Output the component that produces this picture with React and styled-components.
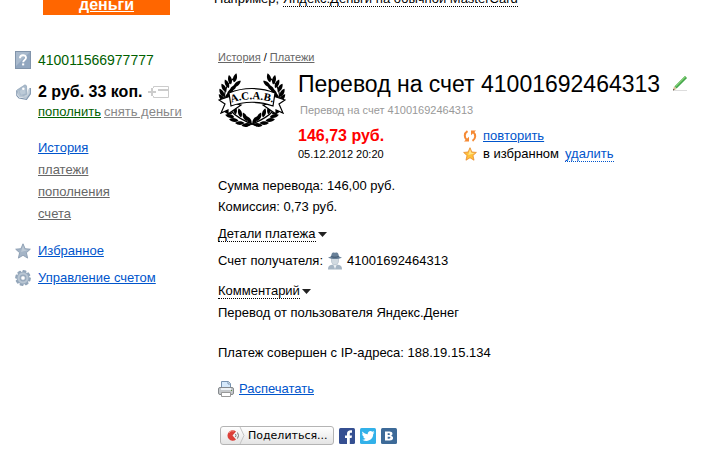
import React from "react";
import styled, { createGlobalStyle } from "styled-components";

const GlobalStyle = createGlobalStyle`
    body {
        margin: 0;
        background: #fff;
        color: #000;
        font-family: Arial, "Liberation Sans", sans-serif;
        font-size: 13px;
        line-height: 20px;
    }
    svg {
        display: block;
        flex: none;
    }
`

const Header = styled.header`
    display: flex;
    align-items: flex-end;
    height: 15px;
    overflow: hidden;
`
const LogoCell = styled.div`
    flex: none;
    box-sizing: border-box;
    width: 214px;
    padding-left: 43px;
`
const Logo = styled.a`
    display: block;
    width: 127px;
    background: #f60;
    color: #fff;
    font-size: 16px;
    font-weight: bold;
    line-height: 20px;
    text-align: center;
`
const Hint = styled.div`
    padding-bottom: 8px;
    line-height: 15px;
    white-space: nowrap;
`
const DottedButton = styled.button`
    padding: 0;
    border: 0;
    border-bottom: 1px dotted ${props => props.$color || "#000"};
    background: none;
    color: ${props => props.$color || "#000"};
    font: inherit;
    line-height: 15px;
    cursor: pointer;
`

const Page = styled.div`
    display: flex;
    align-items: flex-start;
`
const Sidebar = styled.aside`
    flex: none;
    box-sizing: border-box;
    width: 218px;
    padding: 35px 0 0 15px;
`
const SideRow = styled.div`
    display: grid;
    grid-template-columns: 16px 1fr;
    column-gap: 7px;
    align-items: center;
    margin-top: ${props => props.$gap || 0}px;
`
const Account = styled.div`
    color: #006000;
    font-size: 14px;
`
const Balance = styled.div`
    display: flex;
    align-items: center;
    gap: 5px;
    font-size: 16px;
    font-weight: bold;
`
const Link = styled.a`
    color: ${props => props.$color || "#05c"};
    text-decoration: underline;
`
const Actions = styled.div`
    display: flex;
    gap: 3px;
    padding-left: 23px;
`
const NavList = styled.ul`
    margin: 15px 0 0;
    padding: 0 0 0 23px;
    list-style: none;
    line-height: 22px;
`

const Main = styled.main`
    flex: 1;
    min-width: 0;
    padding: 34px 8px 24px 0;
`
const Crumbs = styled.nav`
    font-size: 11px;
    line-height: 16px;
`
const Payment = styled.section`
    display: grid;
    grid-template-columns: 68px 1fr;
    column-gap: 12px;
    padding-top: 4px;
`
const Title = styled.h1`
    display: flex;
    align-items: center;
    gap: 12px;
    margin: 0;
    font-size: 23px;
    font-weight: normal;
    line-height: 30px;
    white-space: nowrap;
`
const IconButton = styled.button`
    padding: 0;
    border: 0;
    background: none;
    cursor: pointer;
`
const Subtitle = styled.div`
    padding: 3px 0 9px 2px;
    color: #999;
    font-size: 11px;
    line-height: 16px;
`
const Summary = styled.div`
    display: grid;
    grid-template-columns: 165px 1fr;
    grid-auto-rows: 18px;
    align-items: center;
`
const Amount = styled.div`
    color: #f00;
    font-size: 16px;
    font-weight: bold;
`
const PayDate = styled.div`
    font-size: 11px;
`
const PayAction = styled.div`
    display: flex;
    align-items: center;
    gap: 6px;
`
const Sums = styled.div`
    margin-top: 12px;
    line-height: 21px;
`
const Line = styled.div`
    display: flex;
    align-items: center;
    gap: ${props => props.$space || 0}px;
    min-height: 16px;
    margin-top: ${props => props.$gap || 0}px;
`
const ShareBar = styled.div`
    display: flex;
    align-items: center;
    gap: 5px;
    margin: 27px 0 0 2px;
`
const ShareButton = styled.button`
    display: flex;
    align-items: center;
    box-sizing: border-box;
    height: 19px;
    padding: 0 5px;
    border: 1px solid #b4b4b4;
    border-radius: 3px;
    background: linear-gradient(#fff, #e4e4e4);
    color: #000;
    font-family: Verdana, "DejaVu Sans", sans-serif;
    font-size: 11px;
    gap: 3px;
    cursor: pointer;
`

function HelpIcon() {
    return (
        <svg width="16" height="18" viewBox="0 0 16 18">
            <rect x=".5" y=".5" width="15" height="17" fill="#91a6bf" stroke="#8194ab" />
            <path d="M1 1h14L1 15z" fill="#a9bacd" />
            <path d="M5 7.2C5 3.2 11 3.4 11 6.8C11 9 8.2 9 8.2 11.2" fill="none" stroke="#fff" strokeWidth="1.9" />
            <rect x="7.1" y="12.4" width="2.1" height="2" fill="#fff" />
        </svg>
    )
}

function WalletIcon() {
    return (
        <svg width="16" height="16" viewBox="0 0 16 16">
            <path d="M2 6L10 .8l1.500 1L12 11 5 12z" fill="#a9bacb" stroke="#8fa3b8" strokeWidth=".7" />
            <path d="M2 6l2.500 6L11 13.500 15 9V4" fill="none" stroke="#b9c6d3" strokeWidth="2" />
            <path d="M1.800 6.500v5L4 14l7.500 1.300L15.300 10V4" fill="none" stroke="#7d93ac" strokeWidth="1.100" />
            <path d="M11.500 11L13.500 5l1-.8V9l-3 4z" fill="#c8d3dd" />
            <path d="M4.500 7L10 3.500l.5 6-4.500 1.200z" fill="#bccad7" />
            <circle cx="8.300" cy="4.800" r="1.200" fill="#fff" />
        </svg>
    )
}

function CardIcon() {
    return (
        <svg width="21" height="12" viewBox="0 0 21 12">
            <path d="M5.500 2V.500h15v11h-15V10" fill="none" stroke="#ccc" />
            <path d="M10 3h10v2H10zM0 5h8v2H0zM3 2h2v8H3z" fill="#ccc" />
        </svg>
    )
}

function StarIcon({ gold }) {
    const size = gold ? 14 : 16
    return (
        <svg width={size} height={size} viewBox="0 0 16 16">
            <path
                d="M8 .8l2.100 4.900 5.200.5-3.900 3.500 1.200 5.400L8 12.300l-4.600 2.800 1.200-5.400L.7 6.200l5.200-.5z"
                fill={gold ? "#ffc13b" : "#a4b4c6"}
                stroke={gold ? "#e5872a" : "#8a9cb1"}
                strokeWidth=".9"
            />
            <path d="M8 2.500l1.500 4 4 .5L6 9z" fill={gold ? "#ffe48a" : "#bdc9d5"} />
        </svg>
    )
}

function GearIcon() {
    const teeth = [0, 45, 90, 135, 180, 225, 270, 315]
    return (
        <svg width="16" height="16" viewBox="0 0 16 16">
            {teeth.map(angle => (
                <rect
                    key={angle}
                    x="6"
                    y=".2"
                    width="4"
                    height="4"
                    rx=".8"
                    fill="#92a5b9"
                    transform={`rotate(${angle + 12} 8 8)`}
                />
            ))}
            <circle cx="8" cy="8" r="4.300" fill="none" stroke="#9aacbf" strokeWidth="4" />
            <circle cx="8" cy="8" r="4.400" fill="none" stroke="#b9c6d3" strokeWidth="2" />
            <circle cx="8" cy="8" r="2.300" fill="#fff" stroke="#8498ae" strokeWidth=".7" />
        </svg>
    )
}

// one half of the laurel, the other one is mirrored
function Branch() {
    const leaves = [
        [17, 9, 15], [12, 11, -12], [19, 15, 50], [9, 15, -25], [15, 19, 48],
        [6, 19, -30], [12, 23, 42], [4, 24, -30], [9, 28, 25], [4, 29, -40],
        [10, 43, -68], [17, 41, -10], [12, 47, -75], [22, 44, -15], [16, 51, -82],
        [27, 48, -25], [22, 54, -90], [31, 51, -35], [28, 56, 80],
    ]
    return (
        <g>
            <path d="M16 9C4 19 4 32 13 42c6 7 15 11 26 15" fill="none" stroke="#000" strokeWidth="1.200" />
            {leaves.map(([x, y, angle]) => (
                <path
                    key={`${x}-${y}`}
                    d="M0-5C2.500-2 2.500 2 0 4.500C-2.500 2-2.500-2 0-5z"
                    transform={`translate(${x} ${y}) rotate(${angle})`}
                />
            ))}
        </g>
    )
}

function Wreath() {
    return (
        <svg width="68" height="60" viewBox="0 0 68 60">
            <Branch />
            <g transform="translate(68 0) scale(-1 1)"><Branch /></g>
            <g fill="#fff" stroke="#000" strokeWidth="1.200">
                <path d="M13 27L1 31l6 4-4 9 7-3 0 4 13-9-9-2zM55 27l12 4-6 4 4 9-7-3 0 4-13-9 9-2z" />
                <path d="M11 24C25 18 43 18 57 24l-2 13C42 32 26 32 13 37z" />
            </g>
            <path id="banner-line" d="M12 34C26 29 42 29 56 34" fill="none" />
            <text textAnchor="middle" fontFamily="Liberation Serif, serif" fontSize="11" fontWeight="bold">
                <textPath href="#banner-line" startOffset="50%">A.C.A.B.</textPath>
            </text>
        </svg>
    )
}

function PencilIcon() {
    return (
        <svg width="16" height="18" viewBox="0 0 16 18">
            <path d="M1 15.500h14" stroke="#ddd" />
            <path d="M3.500 12.500L14 2" stroke="#42a64a" strokeWidth="3" />
            <path d="M3.500 11.500L13.500 1.500" stroke="#86d178" strokeWidth="1.200" />
            <path d="M1 15.500l1-4 2.500 2.500z" fill="#d9b98c" />
            <path d="M1 15.500l.5-1.700 1 1z" fill="#333" />
        </svg>
    )
}

function RepeatIcon() {
    return (
        <svg width="14" height="14" viewBox="0 0 14 14">
            <g fill="none" stroke="#f58a35" strokeWidth="2">
                <path d="M4.500 2.200C1 4.500 1 8.500 3.800 11" />
                <path d="M9.500 11.800C13 9.500 13 5.500 10.200 3" />
            </g>
            <path d="M1 12.500h5V7.800zM13 1.500H8v4.700z" fill="#f58a35" />
        </svg>
    )
}

function Arrow() {
    return (
        <svg width="9" height="5" viewBox="0 0 9 5">
            <path d="M0 0h9L4.500 5z" fill="#222" />
        </svg>
    )
}

function PersonIcon() {
    return (
        <svg width="16" height="18" viewBox="0 0 16 18">
            <path d="M1 17.500c0-4 2-4.500 5-5h4c3 .5 5 1 5 5z" fill="#a5b5c4" />
            <path d="M6 12l2 5 2-5z" fill="#eef2f5" />
            <path d="M4.500 5h7v4c0 5-7 5-7 0z" fill="#d1dae1" stroke="#a8b6c3" strokeWidth=".6" />
            <path d="M1 5.500c3-1 3-1 3.500-3C5 0 7 .3 8 .9c1-.7 3-.7 3.500 1.600.5 2 .5 2 3.500 3-4 2-10 2-14 0z" fill="#688098" />
            <path d="M4.300 4.500c2 1 5 1 7.400 0" fill="none" stroke="#3f5770" />
        </svg>
    )
}

function PrinterIcon() {
    return (
        <svg width="16" height="16" viewBox="0 0 16 16">
            <path d="M3.500 8V.500h7l2 2V8z" fill="#d6e9fb" stroke="#7793b1" />
            <path d="M10 .500v2.500h2.500" fill="#fff" stroke="#7793b1" />
            <rect x=".5" y="6.500" width="15" height="7" rx="1.500" fill="#c5c8cb" stroke="#85898d" />
            <path d="M3 7h10v2H3z" fill="#eef2f5" />
            <path d="M3.500 11.500h9v4h-9z" fill="#fff" stroke="#999" />
            <rect x="13" y="9" width="1" height="1" fill="#528b3a" />
        </svg>
    )
}

function ShareIcon() {
    return (
        <svg width="19" height="17" viewBox="0 0 19 17">
            <path d="M10 4.500A5.200 5.200 0 1 0 10 12.500L6.500 8.500z" fill="#dc4039" />
            <path d="M3 6a4 4 0 0 1 5-2" fill="none" stroke="#f08e81" />
            <path d="M9.500 7q1 1.500 0 3M11.500 5.500q2 3 0 6" fill="none" stroke="#777" />
            <path d="M14 0l4 8.500-4 8.500" fill="none" stroke="#c4c4c4" />
        </svg>
    )
}

function FacebookIcon() {
    return (
        <svg width="16" height="16" viewBox="0 0 16 16">
            <rect width="16" height="16" rx="1.500" fill="#354f91" />
            <path d="M8 16v-6H6V7.500h2V6c0-3 1.500-4 5-3.700v2.500c-1.800-.1-2.200.1-2.200 1.400v1.300H13l-.4 2.500h-1.800v6z" fill="#fff" />
        </svg>
    )
}

function TwitterIcon() {
    return (
        <svg width="16" height="16" viewBox="0 0 16 16">
            <rect width="16" height="16" rx="1.500" fill="#32b1e9" />
            <path d="M2.500 3.500C4 5.400 5.800 6.200 7.700 6.200c-.3-3 3-4.300 4.700-2.400l1.800-.7-1 1.700 1.300-.2-1.300 1.500c0 6-6 8.500-11 5.600 1.500 0 2.500-.3 3.300-1-1.300-.2-2-.9-2.300-1.900h1C3 8.200 2.300 7.300 2.200 6l1 .3C2 5.400 2 4.500 2.500 3.500z" fill="#fff" />
        </svg>
    )
}

function VkIcon() {
    return (
        <svg width="16" height="16" viewBox="0 0 16 16">
            <rect width="16" height="16" rx="1.500" fill="#3d6a98" />
            <path
                d="M4 3.500h4.500c3.500 0 3.800 3.300 1.600 4.200 3 .7 2.600 4.800-1.300 4.800H4zM6.700 5.300v1.800h1.200c1.500 0 1.500-1.800 0-1.800zM6.700 8.800v1.900h1.400c1.800 0 1.800-1.900 0-1.900z"
                fill="#fff"
                fillRule="evenodd"
            />
        </svg>
    )
}

function SideMenu() {
    return (
        <Sidebar>
            <SideRow>
                <HelpIcon />
                <Account>410011566977777</Account>
            </SideRow>
            <SideRow $gap={12}>
                <WalletIcon />
                <Balance>2 руб. 33 коп. <CardIcon /></Balance>
            </SideRow>
            <Actions>
                <Link href="#add" $color="#006000">пополнить</Link>
                <Link href="#withdraw" $color="#888">снять деньги</Link>
            </Actions>
            <NavList>
                <li><Link href="#history">История</Link></li>
                <li><Link href="#payments" $color="#666">платежи</Link></li>
                <li><Link href="#deposits" $color="#666">пополнения</Link></li>
                <li><Link href="#bills" $color="#666">счета</Link></li>
            </NavList>
            <SideRow $gap={16}>
                <StarIcon />
                <Link href="#favorites">Избранное</Link>
            </SideRow>
            <SideRow $gap={7}>
                <GearIcon />
                <Link href="#settings">Управление счетом</Link>
            </SideRow>
        </Sidebar>
    )
}

function App() {
    return (
        <>
            <GlobalStyle />
            <Header>
                <LogoCell>
                    <Logo href="#home">деньги</Logo>
                </LogoCell>
                <Hint>
                    Например, <DottedButton>Яндекс.Деньги на обычной MasterCard</DottedButton>
                </Hint>
            </Header>
            <Page>
                <SideMenu />
                <Main>
                    <Crumbs>
                        <Link href="#history" $color="#666">История</Link> / <Link href="#payments" $color="#666">Платежи</Link>
                    </Crumbs>
                    <Payment>
                        <Wreath />
                        <div>
                            <Title>
                                Перевод на счет 41001692464313
                                <IconButton aria-label="Переименовать"><PencilIcon /></IconButton>
                            </Title>
                            <Subtitle>Перевод на счет 41001692464313</Subtitle>
                            <Summary>
                                <Amount>146,73 руб.</Amount>
                                <PayAction>
                                    <RepeatIcon />
                                    <Link href="#repeat">повторить</Link>
                                </PayAction>
                                <PayDate>05.12.2012 20:20</PayDate>
                                <PayAction>
                                    <StarIcon gold />
                                    <span>в избранном</span>
                                    <DottedButton $color="#05c">удалить</DottedButton>
                                </PayAction>
                            </Summary>
                        </div>
                    </Payment>
                    <Sums>
                        <div>Сумма перевода: 146,00 руб.</div>
                        <div>Комиссия: 0,73 руб.</div>
                    </Sums>
                    <Line $gap={9} $space={2}>
                        <DottedButton>Детали платежа</DottedButton>
                        <Arrow />
                    </Line>
                    <Line $gap={9} $space={4}>
                        Счет получателя: <PersonIcon /> 41001692464313
                    </Line>
                    <Line $gap={12} $space={2}>
                        <DottedButton>Комментарий</DottedButton>
                        <Arrow />
                    </Line>
                    <Line $gap={4}>Перевод от пользователя Яндекс.Денег</Line>
                    <Line $gap={20}>Платеж совершен с IP-адреса: 188.19.15.134</Line>
                    <Line $gap={16} $space={5}>
                        <PrinterIcon />
                        <Link href="#print">Распечатать</Link>
                    </Line>
                    <ShareBar>
                        <ShareButton><ShareIcon />Поделиться...</ShareButton>
                        <FacebookIcon />
                        <TwitterIcon />
                        <VkIcon />
                    </ShareBar>
                </Main>
            </Page>
        </>
    )
}

export default App;
